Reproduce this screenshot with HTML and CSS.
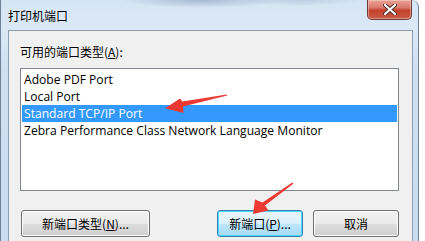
FILE: index.html
```html
<!DOCTYPE html>
<html lang="zh-CN">
<head>
    <meta charset="UTF-8">
    <title>打印机端口</title>
    <link rel="stylesheet" href="styles.css">
</head>
<body>
    <div class="window">
        <div class="titlebar">
            <span class="title">打印机端口</span>
            <button class="close" aria-label="关闭">
                <svg width="14" height="11" viewBox="0 0 14 11">
                    <path d="M2 1 L12 10 M12 1 L2 10" stroke="#4a2a28" stroke-width="4" stroke-linecap="round"/>
                    <path d="M2 1 L12 10 M12 1 L2 10" stroke="#fff" stroke-width="2.2" stroke-linecap="round"/>
                </svg>
            </button>
        </div>

        <div class="client">
            <p class="label">可用的端口类型(<u>A</u>):</p>
            <ul class="listbox">
                <li>Adobe PDF Port</li>
                <li>Local Port</li>
                <li class="selected">Standard TCP/IP Port</li>
                <li>Zebra Performance Class Network Language Monitor</li>
            </ul>

            <div class="buttons">
                <button class="btn btn-wide">新端口类型(<u>N</u>)...</button>
                <button class="btn btn-default">新端口(<u>P</u>)...</button>
                <button class="btn">取消</button>
            </div>
        </div>
    </div>

    <!-- red arrows drawn on top of the screenshot -->
    <svg class="arrows" width="425" height="241" viewBox="0 0 425 241">
        <polygon points="226.8,94.4 182.4,101.6 180,98.5 165,108.3 183.5,113 183,106.5 227.2,95.6"/>
        <polygon points="292.4,182.4 262.5,202.5 255,199.5 253,214 268.5,210.5 265,205.5 293.6,183.6"/>
    </svg>
</body>
</html>
```

FILE: styles.css
```css
* {
    box-sizing: border-box;
    margin: 0;
    padding: 0;
}

body {
    background: #fff;
    font-family: "Noto Sans CJK SC", "Open Sans", sans-serif;
    font-size: 12px;
    color: #000;
    position: relative;
    width: 425px;
    height: 241px;
    overflow: hidden;
}

.window {
    width: 419px;
    height: 241px;
    border-left: 1px solid #6f8196;
    border-right: 1px solid #6f8196;
    border-top-right-radius: 7px;
    background: linear-gradient(180deg, #d6e5f5 0%, #dbe8f6 12%, #cfe0f2 30%, #c9dcf0 100%);
}

.titlebar {
    height: 30px;
    display: flex;
    align-items: flex-start;
    padding: 0 6px 0 7px;
    background:
        radial-gradient(ellipse 80px 8px at 200px 0, rgba(110, 130, 160, 0.45), transparent),
        radial-gradient(ellipse 60px 6px at 300px 0, rgba(130, 150, 175, 0.3), transparent);
}

.title {
    line-height: 18px;
    margin-top: 7px;
    font-size: 12px;
    color: #000;
}

.close {
    margin-left: auto;
    width: 45px;
    height: 20px;
    border: 1px solid #6d3b36;
    border-top: none;
    border-radius: 0 0 5px 5px;
    background: linear-gradient(180deg, #e8a497 0%, #d9796a 40%, #c4412c 55%, #c85b45 100%);
    display: flex;
    align-items: center;
    justify-content: center;
    box-shadow: inset 0 0 0 1px rgba(255, 220, 210, 0.45);
}

.client {
    margin: 0 5px 0 7px;
    height: 211px;
    background: #f0f0f0;
    border: 1px solid #8a9db3;
    border-bottom: none;
    padding: 13px 13px 0 11px;
}

.label {
    line-height: 16px;
    height: 16px;
    margin-bottom: 8px;
}

.listbox {
    list-style: none;
    height: 123px;
    background: #fff;
    border: 1px solid #828790;
    padding: 1px;
    font-family: "Open Sans", "Noto Sans CJK SC", sans-serif;
    font-size: 12.1px;
}

.listbox li {
    height: 17px;
    line-height: 17px;
    padding-left: 2px;
    white-space: nowrap;
}

.listbox li:first-child {
    margin-top: 1px;
}

.listbox li.selected {
    background: #3399ff;
    color: #fff;
}

.buttons {
    display: flex;
    gap: 10px;
    margin-top: 19px;
    padding-left: 1px;
}

.btn {
    width: 86px;
    height: 27px;
    font-family: "Noto Sans CJK SC", "Open Sans", sans-serif;
    font-size: 12px;
    color: #000;
    border: 1px solid #707070;
    border-radius: 3px;
    background: linear-gradient(180deg, #f2f2f2 0%, #ebebeb 50%, #dddddd 51%, #cfcfcf 100%);
    box-shadow: inset 0 0 0 1px #fcfcfc;
}

.btn-wide {
    width: 129px;
    margin-right: 57px;
}

.btn-default {
    border-color: #3c7fb1;
    background: linear-gradient(180deg, #eaf6fd 0%, #d9f0fc 50%, #bee6fd 51%, #a7d9f5 100%);
    box-shadow: inset 0 0 0 1px #48d8fb;
}

.arrows {
    position: absolute;
    top: 0;
    left: 0;
    pointer-events: none;
}

.arrows polygon {
    fill: #ec3a32;
}
```
